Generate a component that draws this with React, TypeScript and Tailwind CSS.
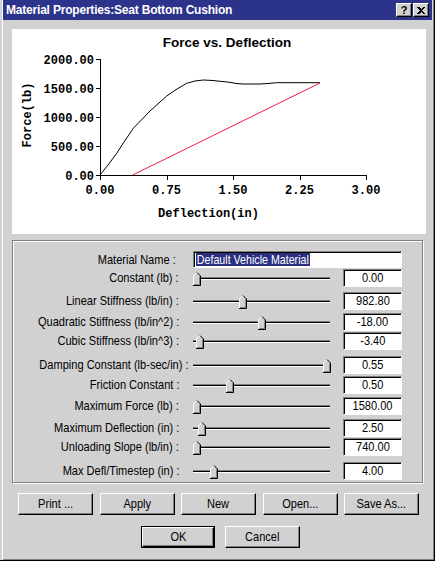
import React from "react";

type Row = { label: string; value: string; thumb: number; gap: string };

// slider rows under the chart; thumb is the offset along the track in px
const rows: Row[] = [
  { label: "Constant (lb) :", value: "0.00", thumb: 0, gap: "mt-[1px]" },
  { label: "Linear Stiffness (lb/in) :", value: "982.80", thumb: 46, gap: "mt-[5px]" },
  { label: "Quadratic Stiffness (lb/in^2) :", value: "-18.00", thumb: 65, gap: "mt-[3px]" },
  { label: "Cubic Stiffness (lb/in^3) :", value: "-3.40", thumb: 3, gap: "mt-[1px]" },
  { label: "Damping Constant (lb-sec/in) :", value: "0.55", thumb: 130, gap: "mt-[6px]" },
  { label: "Friction Constant :", value: "0.50", thumb: 33, gap: "mt-[2px]" },
  { label: "Maximum Force (lb) :", value: "1580.00", thumb: 0, gap: "mt-[3px]" },
  { label: "Maximum Deflection (in) :", value: "2.50", thumb: 5, gap: "mt-[4px]" },
  { label: "Unloading Slope (lb/in) :", value: "740.00", thumb: 0, gap: "mt-[1px]" },
  { label: "Max Defl/Timestep (in) :", value: "4.00", thumb: 17, gap: "mt-[6px]" },
];

const ui = "font-['Liberation_Sans',Arial,sans-serif] text-[13px] text-black";

const raised =
  "bg-[#d1d1d1] border border-t-white border-l-white border-r-black border-b-black shadow-[inset_-1px_-1px_0_#808080]";

const sunken =
  "bg-white border border-t-[#808080] border-l-[#808080] border-r-white border-b-white shadow-[inset_1px_1px_0_#000]";

const mono = "Liberation Mono, Courier New, monospace";

// narrow dialog text: Arial squeezed the way Arial Narrow is
const Narrow = ({ children, origin = "origin-center" }: { children: React.ReactNode; origin?: string }) => (
  <span className={`inline-block whitespace-nowrap scale-x-[0.85] ${origin}`}>{children}</span>
);

// Force vs. Deflection plot
const Chart = () => {
  const yTicks = [
    { label: "2000.00", y: 30 },
    { label: "1500.00", y: 59 },
    { label: "1000.00", y: 88 },
    { label: "500.00", y: 117 },
    { label: "0.00", y: 146 },
  ];
  const xTicks = [
    { label: "0.00", x: 88 },
    { label: "0.75", x: 154.5 },
    { label: "1.50", x: 221 },
    { label: "2.25", x: 287.5 },
    { label: "3.00", x: 354 },
  ];
  const loading =
    "88,146 96,136 104.7,124.3 112,113 121.3,99.3 138,82 154.7,67 165,60 174.7,54.3 183,52 191.3,51 201,51.5 210,52.5 218,53.3 224,54.5 231,55 248,55 256,54.5 264.7,53.7 308,53.7";

  return (
    <svg width={414} height={205} className="block">
      <text
        x={215}
        y={18}
        textAnchor="middle"
        fontFamily="Liberation Sans, Arial, sans-serif"
        fontWeight="bold"
        fontSize={13.5}
      >
        Force vs. Deflection
      </text>

      <g stroke="#000" shapeRendering="crispEdges">
        <line x1={88.5} y1={30} x2={88.5} y2={146.5} />
        <line x1={88} y1={146.5} x2={354.5} y2={146.5} />
        {yTicks.map((t) => (
          <line key={t.label} x1={84} y1={t.y + 0.5} x2={88} y2={t.y + 0.5} />
        ))}
        {xTicks.map((t) => (
          <line key={t.label} x1={t.x + 0.5} y1={146} x2={t.x + 0.5} y2={151} />
        ))}
      </g>

      <g fontFamily={mono} fontWeight="bold" fontSize={12}>
        {yTicks.map((t) => (
          <text key={t.label} x={82} y={t.y + 4.5} textAnchor="end">
            {t.label}
          </text>
        ))}
        {xTicks.map((t) => (
          <text key={t.label} x={t.x} y={165} textAnchor="middle">
            {t.label}
          </text>
        ))}
        <text x={196.5} y={188} textAnchor="middle">
          Deflection(in)
        </text>
        <text x={0} y={0} textAnchor="middle" transform="translate(19 86) rotate(-90)">
          Force(lb)
        </text>
      </g>

      <polyline points={loading} fill="none" stroke="#000" strokeWidth={1} />
      <line x1={120.7} y1={146} x2={308} y2={54} stroke="#ee1c3a" strokeWidth={1} />
    </svg>
  );
};

// trackbar thumb, pointed at the top
const Thumb = ({ left }: { left: number }) => (
  <svg width={8} height={14} viewBox="0 0 8 14" className="absolute top-[3px]" style={{ left }}>
    <path d="M0.5 13.5V4L4 0.5L7.5 4V13.5Z" fill="#d1d1d1" />
    <path d="M0.5 13V4L4 0.5" fill="none" stroke="#fff" />
    <path d="M4 0.5L7.5 4V13.5H0" fill="none" stroke="#000" />
    <path d="M6.5 4.5V12.5H1" fill="none" stroke="#808080" />
  </svg>
);

const Slider = ({ thumb }: { thumb: number }) => (
  <div className="relative w-[137px] h-[18px] flex items-center">
    <div className="w-full h-[3px] border-t border-t-[#808080] border-b border-b-white bg-black" />
    <Thumb left={thumb} />
  </div>
);

const Button = ({ label, isDefault }: { label: string; isDefault?: boolean }) =>
  isDefault ? (
    <div className="border border-black">
      <div className={`${raised} ${ui} w-[72px] h-[20px] flex items-center justify-center`}>
        <Narrow>{label}</Narrow>
      </div>
    </div>
  ) : (
    <div className={`${raised} ${ui} w-[75px] h-[22px] flex items-center justify-center`}>
      <Narrow>{label}</Narrow>
    </div>
  );

export default function App() {
  return (
    <div className="w-[435px] h-[561px] bg-[#d1d1d1] border-r border-b border-black shadow-[inset_2px_0_0_#d1d1d1,inset_3px_0_0_#fff,inset_-1px_-1px_0_#808080] flex flex-col overflow-hidden">
      {/* caption */}
      <div className="ml-[3px] mr-[2px] h-[20px] bg-[#2b338b] flex items-center pl-[3px] pr-[3px]">
        <span className="text-white font-bold text-[12px] tracking-[-0.2px] font-['Liberation_Sans',Arial,sans-serif]">
          Material Properties:Seat Bottom Cushion
        </span>
        <div className="ml-auto flex gap-[1px]">
          <div className={`${raised} w-[16px] h-[14px] flex items-center justify-center text-[11px] font-bold leading-none font-['Liberation_Sans',sans-serif]`}>
            ?
          </div>
          <div className={`${raised} w-[16px] h-[14px] flex items-center justify-center`}>
            <svg width={8} height={7} viewBox="0 0 8 7" shapeRendering="crispEdges">
              <path d="M0 0h2l2 2l2-2h2l-3 3.5l3 3.5h-2l-2-2l-2 2h-2l3-3.5z" fill="#000" />
            </svg>
          </div>
        </div>
      </div>

      <div className="ml-[12px] mt-[9px] w-[414px] h-[205px] bg-white">
        <Chart />
      </div>

      {/* property group */}
      <div className="ml-[12px] mt-[6px] w-[411px] h-[243px] border border-[#808080] shadow-[1px_1px_0_#fff,inset_1px_1px_0_#fff] pt-[10px]">
        <div className="flex items-center h-[17px]">
          <div className={`${ui} w-[163px] text-right`}>
            <Narrow origin="origin-right">Material Name :</Narrow>
          </div>
          <div className={`${sunken} ml-[17px] w-[209px] h-[17px] flex items-center pl-[2px]`}>
            <span className={`${ui} inline-block whitespace-nowrap scale-x-[0.82] origin-left bg-[#2a2f80] text-white leading-[13px] px-px`}>
              Default Vehicle Material
            </span>
          </div>
        </div>
        {rows.map((r) => (
          <div key={r.label} className={`flex items-center h-[18px] ${r.gap}`}>
            <div className={`${ui} w-[166px] text-right`}>
              <Narrow origin="origin-right">{r.label}</Narrow>
            </div>
            <div className="ml-[14px]">
              <Slider thumb={r.thumb} />
            </div>
            <div className={`${sunken} ${ui} ml-[13px] w-[59px] h-[18px] flex items-center justify-center`}>
              <Narrow>{r.value}</Narrow>
            </div>
          </div>
        ))}
      </div>

      <div className="ml-[18px] mt-[10px] flex gap-[6.5px]">
        <Button label="Print ..." />
        <Button label="Apply" />
        <Button label="New" />
        <Button label="Open..." />
        <Button label="Save As..." />
      </div>

      <div className="ml-[141px] mt-[11px] flex gap-[10px]">
        <Button label="OK" isDefault />
        <Button label="Cancel" />
      </div>
    </div>
  );
}
